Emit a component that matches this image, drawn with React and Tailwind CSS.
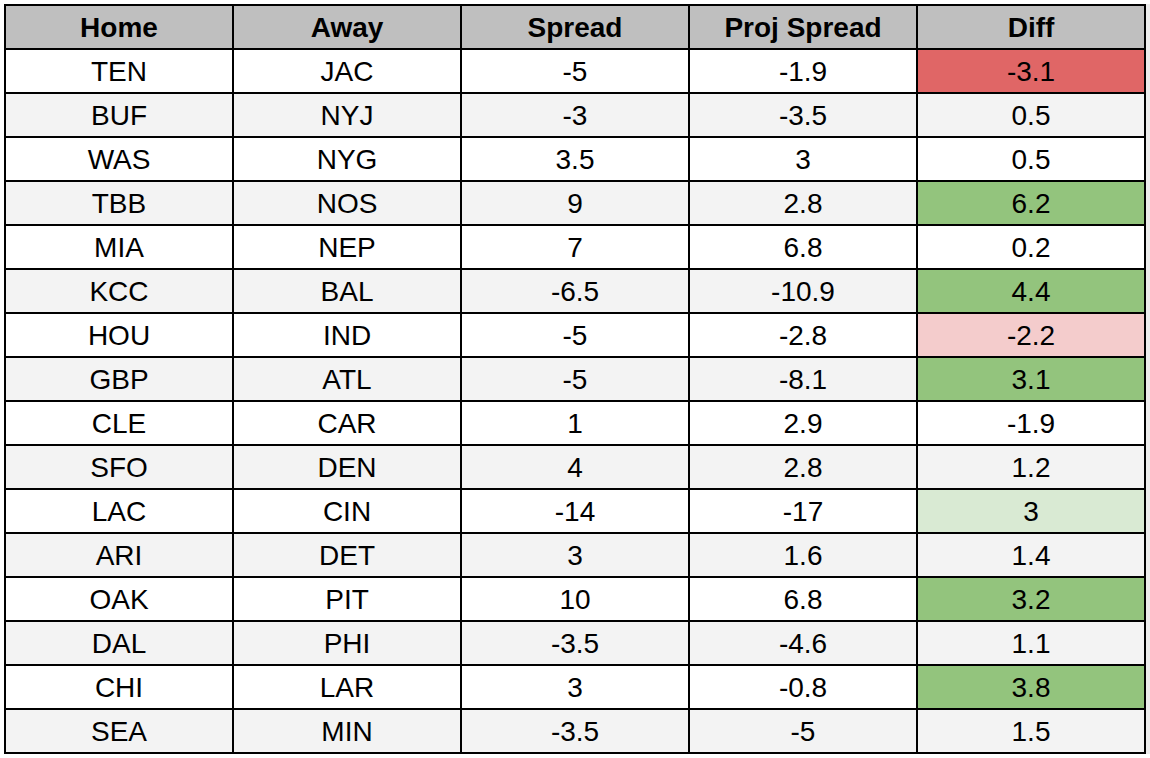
import React from "react";

const rows = [
  ["TEN", "JAC", "-5", "-1.9", "-3.1", "bg-[#e06666]"],
  ["BUF", "NYJ", "-3", "-3.5", "0.5"],
  ["WAS", "NYG", "3.5", "3", "0.5"],
  ["TBB", "NOS", "9", "2.8", "6.2", "bg-[#93c47d]"],
  ["MIA", "NEP", "7", "6.8", "0.2"],
  ["KCC", "BAL", "-6.5", "-10.9", "4.4", "bg-[#93c47d]"],
  ["HOU", "IND", "-5", "-2.8", "-2.2", "bg-[#f4cccc]"],
  ["GBP", "ATL", "-5", "-8.1", "3.1", "bg-[#93c47d]"],
  ["CLE", "CAR", "1", "2.9", "-1.9"],
  ["SFO", "DEN", "4", "2.8", "1.2"],
  ["LAC", "CIN", "-14", "-17", "3", "bg-[#d9ead3]"],
  ["ARI", "DET", "3", "1.6", "1.4"],
  ["OAK", "PIT", "10", "6.8", "3.2", "bg-[#93c47d]"],
  ["DAL", "PHI", "-3.5", "-4.6", "1.1"],
  ["CHI", "LAR", "3", "-0.8", "3.8", "bg-[#93c47d]"],
  ["SEA", "MIN", "-3.5", "-5", "1.5"],
];

const headers = ["Home", "Away", "Spread", "Proj Spread", "Diff"];

export default function App() {
  return (
    <div
      className="w-[1150px] h-[758px] bg-white pt-[4px] pl-[4px] flex items-start text-black"
      style={{ fontFamily: '"Liberation Sans", Arial, sans-serif' }}
    >
      <div className="grid grid-cols-[226px_226px_226px_226px_226px] auto-rows-[42px] gap-[2px] p-[2px] bg-black w-[1142px]">
        {headers.map((h) => (
          <div
            key={h}
            className="bg-[#bfbfbf] flex items-center justify-center pt-[1px] text-[28px] font-bold"
          >
            {h}
          </div>
        ))}
        {rows.map((r, i) => {
          const rowBg = i % 2 === 0 ? "bg-white" : "bg-[#f3f3f3]";
          return r.slice(0, 5).map((cell, j) => (
            <div
              key={i + "-" + j}
              className={`flex items-center justify-center pt-[1px] text-[28px] ${
                j === 4 && r[5] ? r[5] : rowBg
              }`}
            >
              {cell}
            </div>
          ));
        })}
      </div>
      {/* next spreadsheet column peeking in */}
      <div className="w-[4px] h-[750px] bg-[#ececec]" />
    </div>
  );
}
